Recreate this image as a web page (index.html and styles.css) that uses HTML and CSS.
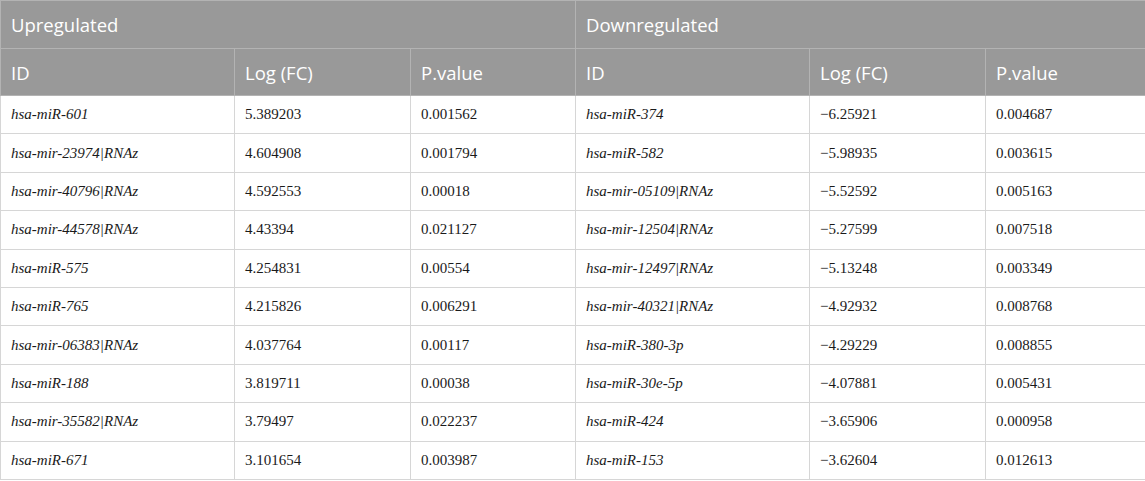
FILE: index.html
```html
<!DOCTYPE html>
<html>
<head>
<meta charset="utf-8">
<link rel="stylesheet" href="styles.css">
</head>
<body>
<table class="tbl">
<colgroup>
<col class="c1"><col class="c2"><col class="c3"><col class="c4"><col class="c5"><col class="c6">
</colgroup>
<thead>
<tr class="h1"><th colspan="3">Upregulated</th><th colspan="3">Downregulated</th></tr>
<tr class="h2"><th>ID</th><th>Log (FC)</th><th>P.value</th><th>ID</th><th>Log (FC)</th><th>P.value</th></tr>
</thead>
<tbody>
<tr><td class="id">hsa-miR-601</td><td>5.389203</td><td>0.001562</td><td class="id">hsa-miR-374</td><td>−6.25921</td><td>0.004687</td></tr>
<tr><td class="id">hsa-mir-23974|RNAz</td><td>4.604908</td><td>0.001794</td><td class="id">hsa-miR-582</td><td>−5.98935</td><td>0.003615</td></tr>
<tr><td class="id">hsa-mir-40796|RNAz</td><td>4.592553</td><td>0.00018</td><td class="id">hsa-mir-05109|RNAz</td><td>−5.52592</td><td>0.005163</td></tr>
<tr><td class="id">hsa-mir-44578|RNAz</td><td>4.43394</td><td>0.021127</td><td class="id">hsa-mir-12504|RNAz</td><td>−5.27599</td><td>0.007518</td></tr>
<tr><td class="id">hsa-miR-575</td><td>4.254831</td><td>0.00554</td><td class="id">hsa-mir-12497|RNAz</td><td>−5.13248</td><td>0.003349</td></tr>
<tr><td class="id">hsa-miR-765</td><td>4.215826</td><td>0.006291</td><td class="id">hsa-mir-40321|RNAz</td><td>−4.92932</td><td>0.008768</td></tr>
<tr><td class="id">hsa-mir-06383|RNAz</td><td>4.037764</td><td>0.00117</td><td class="id">hsa-miR-380-3p</td><td>−4.29229</td><td>0.008855</td></tr>
<tr><td class="id">hsa-miR-188</td><td>3.819711</td><td>0.00038</td><td class="id">hsa-miR-30e-5p</td><td>−4.07881</td><td>0.005431</td></tr>
<tr><td class="id">hsa-mir-35582|RNAz</td><td>3.79497</td><td>0.022237</td><td class="id">hsa-miR-424</td><td>−3.65906</td><td>0.000958</td></tr>
<tr><td class="id">hsa-miR-671</td><td>3.101654</td><td>0.003987</td><td class="id">hsa-miR-153</td><td>−3.62604</td><td>0.012613</td></tr>
</tbody>
</table>
</body>
</html>
```
FILE: styles.css
```css
html, body {
  margin: 0;
  padding: 0;
  background: #ffffff;
}
.tbl {
  border-collapse: collapse;
  width: 1145px;
  table-layout: fixed;
}
.c1 { width: 234px; }
.c2 { width: 176px; }
.c3 { width: 165px; }
.c4 { width: 234px; }
.c5 { width: 176px; }
.c6 { width: 160px; }
.tbl th {
  background: #999999;
  color: #ffffff;
  font-family: "Open Sans", sans-serif;
  font-weight: 400;
  font-size: 18.5px;
  text-align: left;
  padding: 0 10px;
  border: 1px solid #b3b3b3;
}
.h1 th { height: 47px; }
.h2 th { height: 46px; }
.tbl td {
  font-family: "Liberation Serif", serif;
  font-size: 15px;
  color: #1a1a1a;
  padding: 0 10px;
  height: 37.4px;
  border: 1px solid #d6d6d6;
}
.tbl td.id {
  font-style: italic;
}
```
